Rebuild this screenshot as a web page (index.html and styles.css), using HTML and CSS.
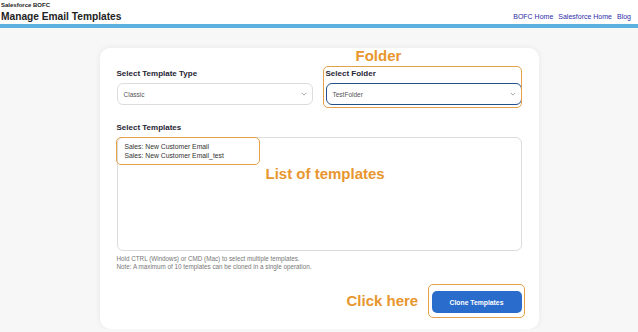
FILE: index.html
```html
<!DOCTYPE html>
<html lang="en">
<head>
  <meta charset="UTF-8" />
  <meta name="viewport" content="width=device-width, initial-scale=1.0" />
  <title>Manage Email Templates</title>
  <link rel="stylesheet" href="styles.css">
</head>
<body>
  <header class="topbar">
    <div class="brand">
      <div class="org">Salesforce BOFC</div>
      <h1>Manage Email Templates</h1>
    </div>
    <nav class="links">
      <a href="#">BOFC Home</a>
      <a href="#">Salesforce Home</a>
      <a href="#">Blog</a>
    </nav>
  </header>

  <main class="card">
    <div class="row">
      <div class="field">
        <label>Select Template Type</label>
        <div class="select">
          <span>Classic</span>
          <svg class="chev" viewBox="0 0 8 5" width="6" height="4"><path d="M1 1l3 3 3-3" fill="none" stroke="#888" stroke-width="1"/></svg>
        </div>
      </div>
      <div class="field">
        <label>Select Folder</label>
        <div class="select focused">
          <span>TestFolder</span>
          <svg class="chev" viewBox="0 0 8 5" width="6" height="4"><path d="M1 1l3 3 3-3" fill="none" stroke="#888" stroke-width="1"/></svg>
        </div>
      </div>
    </div>

    <div class="field">
      <label>Select Templates</label>
      <div class="listbox">
        <div class="option">Sales: New Customer Email</div>
        <div class="option">Sales: New Customer Email_test</div>
      </div>
    </div>

    <p class="hint">Hold CTRL (Windows) or CMD (Mac) to select multiple templates.<br>Note: A maximum of 10 templates can be cloned in a single operation.</p>

    <div class="actions">
      <button class="clone">Clone Templates</button>
    </div>

    <!-- annotations drawn over the form -->
    <div class="note-box box-folder"></div>
    <div class="note-text text-folder">Folder</div>
    <div class="note-box box-list"></div>
    <div class="note-text text-list">List of templates</div>
    <div class="note-text text-click">Click here</div>
    <div class="note-box box-button"></div>
  </main>
</body>
</html>
```

FILE: styles.css
```css
body {
  margin: 0;
  background: #f7f7f7;
  font-family: 'Liberation Sans', Arial, sans-serif;
  color: #222;
}

.topbar {
  background: #ffffff;
  display: flex;
  justify-content: space-between;
  align-items: flex-end;
  padding: 2px 7px 1px 1px;
  border-bottom: 4px solid #5db1e0;
}

.org {
  font-size: 6px;
  font-weight: bold;
  line-height: 7px;
}

h1 {
  margin: 2px 0 0;
  font-size: 10.2px;
  line-height: 12px;
}

.links {
  display: flex;
  gap: 5px;
  font-size: 7px;
  padding-bottom: 3px;
}

.links a {
  color: #2c2ca8;
  text-decoration: none;
}

.card {
  position: relative;
  width: 405px;
  margin: 20px auto 0;
  padding: 21px 17px 16px;
  background: #ffffff;
  border-radius: 10px;
  box-shadow: 0 0 6px rgba(0, 0, 0, 0.07);
  font-family: 'Liberation Sans', Arial, sans-serif;
}

.row {
  display: grid;
  grid-template-columns: 1fr 1fr;
  gap: 13px;
  margin-bottom: 18px;
}

.field label {
  display: block;
  font-size: 8px;
  font-weight: bold;
  color: #1f2533;
  margin-bottom: 5px;
}

.select {
  height: 20px;
  border: 1px solid #dcdcdc;
  border-radius: 6px;
  display: flex;
  align-items: center;
  justify-content: space-between;
  padding: 0 5px 0 6px;
  font-size: 6.5px;
  color: #555;
}

.select.focused {
  border-color: #23508a;
}

.listbox {
  height: 104px;
  border: 1px solid #dcdcdc;
  border-radius: 6px;
  padding: 4px 7px;
}

.option {
  font-size: 6.8px;
  line-height: 9px;
  color: #333;
}

.hint {
  margin: 4px 0 0;
  font-size: 6.3px;
  line-height: 8px;
  color: #777;
}

.actions {
  display: flex;
  justify-content: flex-end;
  margin-top: 20px;
}

.clone {
  width: 90px;
  height: 22px;
  border: none;
  border-radius: 5px;
  background: #2a6ccb;
  color: #ffffff;
  font-family: 'Liberation Sans', Arial, sans-serif;
  font-weight: bold;
  font-size: 6.8px;
}

.note-box {
  position: absolute;
  border: 1px solid #e3a24a;
  border-radius: 5px;
}

.note-text {
  position: absolute;
  color: #e8962e;
  font-weight: bold;
  font-size: 15px;
  line-height: 15px;
  white-space: nowrap;
}

.box-folder { left: 223px; top: 18px; width: 197px; height: 40px; }
.text-folder { left: 256px; top: 0; }
.box-list { left: 16px; top: 89px; width: 142px; height: 26px; }
.text-list { left: 166px; top: 118px; }
.text-click { left: 247px; top: 245px; }
.box-button { left: 328px; top: 236px; width: 95px; height: 32px; }
```
